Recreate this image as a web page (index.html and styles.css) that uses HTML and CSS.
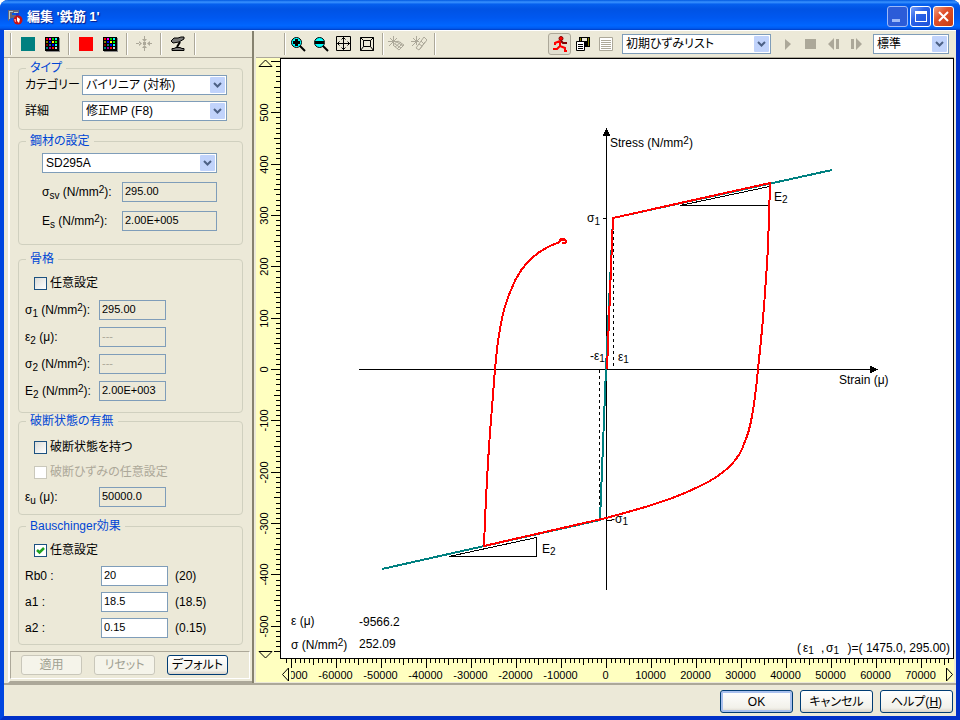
FILE: index.html
```html
<!DOCTYPE html>
<html lang="ja">
<head>
    <meta charset="UTF-8" />
    <meta name="viewport" content="width=device-width, initial-scale=1" />
    <title>編集 '鉄筋 1'</title>
    <link rel="stylesheet" href="styles.css">
</head>
<body>
    <svg class="defs" aria-hidden="true">
        <symbol id="palette" viewBox="0 0 16 16">
            <path fill="#888" d="M2 2h14v14H2z" />
            <path d="M1 1h14v14H1z" />
            <path fill="#f00" d="M2 2h2v2H2z" /><path fill="#f0f" d="M5 2h2v2H5z" />
            <path fill="#0c0" d="M8 2h2v2H8z" /><path fill="#0ff" d="M11 2h2v2h-2zM11 8h2v2h-2z" />
            <path fill="#808000" d="M2 5h2v2H2z" /><path fill="#00f" d="M5 5h2v2H5zM8 8h2v2H8z" />
            <path fill="#ff0" d="M8 5h2v2H8z" /><path fill="#0f0" d="M11 5h2v2h-2z" />
            <path fill="#800000" d="M2 8h2v2H2z" />
            <path fill="#008080" d="M5 8h2v2H5zM2 11h2v2H2z" /><path fill="#a000a0" d="M5 11h2v2H5z" />
            <path fill="#f00" d="M8 11h2v2H8z" /><path fill="#ccc" d="M11 11h2v2h-2z" />
        </symbol>
    </svg>

    <div class="window">
        <header class="titlebar">
            <svg class="app-icon" width="16" height="16" viewBox="0 0 16 16">
                <path fill="#667" d="M1 1h11v3H5v2h4v3H4l-3 3z" />
                <path fill="#b8cccc" d="M2 2h4v1H3v7H2zM7 3h4v1H7z" />
                <path fill="#2434c8" d="M9 4h3v4H9z" />
                <circle cx="11" cy="11" r="4.5" fill="#c71212" />
                <path fill="#fff" d="M10 8l3 2-1 4-2-2z" />
                <path fill="#f88" d="M7 10h2v3H8z" />
            </svg>
            <h1>編集 '鉄筋 1'</h1>
            <div class="window-buttons">
                <button class="win-btn minimize" aria-label="最小化">
                    <svg width="19" height="19" viewBox="0 0 19 19"><path fill="#9db9f8" d="M4 12h8v3H4z" /></svg>
                </button>
                <button class="win-btn" aria-label="最大化">
                    <svg width="19" height="19" viewBox="0 0 19 19"><path fill="#fff" d="M4 4h12v11H4zM5 7v7h10V7z" fill-rule="evenodd" /></svg>
                </button>
                <button class="win-btn close" aria-label="閉じる">
                    <svg width="19" height="19" viewBox="0 0 19 19"><path stroke="#fff" stroke-width="2" d="M5 5l9 9M14 5l-9 9" /></svg>
                </button>
            </div>
        </header>

        <main class="content">
            <section class="side">
                <div class="toolbar">
                    <span class="sep"></span>
                    <button class="tool" aria-label="骨格の色"><span class="swatch teal"></span></button>
                    <button class="tool" aria-label="骨格の色を選択"><svg width="16" height="16"><use href="#palette" /></svg></button>
                    <span class="sep"></span>
                    <button class="tool" aria-label="履歴の色"><span class="swatch red"></span></button>
                    <button class="tool" aria-label="履歴の色を選択"><svg width="16" height="16"><use href="#palette" /></svg></button>
                    <span class="sep"></span>
                    <button class="tool" aria-label="中央へ">
                        <svg width="16" height="16" viewBox="0 0 16 16" fill="#aca899">
                            <path d="M7 6h3v3H7zM6 3h5L8.500 6zM8 0h1v4H8zM6 12h5L8.500 9zM8 12h1v3H8zM3 5v5l3-2.500zM0 7h4v1H0zM14 5v5l-3-2.500zM13 7h3v1h-3z" />
                        </svg>
                    </button>
                    <span class="sep"></span>
                    <button class="tool" aria-label="顕微鏡">
                        <svg width="18" height="16" viewBox="0 0 18 16">
                            <path fill="#777" stroke="#000" d="M2 5l3-3h4l3-1h3v2l-5 3-6 1zM3 14.500v-2h2l2-1h4l2 1h2v2z" />
                            <path fill="none" stroke="#000" stroke-width="2" d="M8 11l3-5" />
                        </svg>
                    </button>
                    <span class="sep"></span>
                </div>

                <form class="panel">
                    <div class="groups">
                        <fieldset class="group type">
                            <legend>タイプ</legend>
                            <div class="row">
                                <label for="category">カテゴリー</label>
                                <select id="category" class="combo"><option>バイリニア (対称)</option></select>
                            </div>
                            <div class="row">
                                <label for="detail">詳細</label>
                                <select id="detail" class="combo"><option>修正MP (F8)</option></select>
                            </div>
                        </fieldset>

                        <fieldset class="group steel">
                            <legend>鋼材の設定</legend>
                            <select class="combo" aria-label="鋼材"><option>SD295A</option></select>
                            <div class="row">
                                <label for="sy">σ<sub>sv</sub> (N/mm<sup>2</sup>):</label>
                                <input id="sy" class="field" type="text" value="295.00" readonly />
                            </div>
                            <div class="row">
                                <label for="es">E<sub>s</sub> (N/mm<sup>2</sup>):</label>
                                <input id="es" class="field" type="text" value="2.00E+005" readonly />
                            </div>
                        </fieldset>

                        <fieldset class="group skeleton">
                            <legend>骨格</legend>
                            <label class="check"><input type="checkbox" />任意設定</label>
                            <div class="row">
                                <label for="s1">σ<sub>1</sub> (N/mm<sup>2</sup>):</label>
                                <input id="s1" class="field" type="text" value="295.00" readonly />
                            </div>
                            <div class="row">
                                <label for="e2">ε<sub>2</sub> (μ):</label>
                                <input id="e2" class="field" type="text" value="---" disabled />
                            </div>
                            <div class="row">
                                <label for="s2">σ<sub>2</sub> (N/mm<sup>2</sup>):</label>
                                <input id="s2" class="field" type="text" value="---" disabled />
                            </div>
                            <div class="row">
                                <label for="E2">E<sub>2</sub> (N/mm<sup>2</sup>):</label>
                                <input id="E2" class="field" type="text" value="2.00E+003" readonly />
                            </div>
                        </fieldset>

                        <fieldset class="group rupture">
                            <legend>破断状態の有無</legend>
                            <label class="check"><input type="checkbox" />破断状態を持つ</label>
                            <label class="check off"><input type="checkbox" disabled />破断ひずみの任意設定</label>
                            <div class="row">
                                <label for="eu">ε<sub>u</sub> (μ):</label>
                                <input id="eu" class="field" type="text" value="50000.0" readonly />
                            </div>
                        </fieldset>

                        <fieldset class="group bauschinger">
                            <legend>Bauschinger効果</legend>
                            <label class="check"><input type="checkbox" checked />任意設定</label>
                            <div class="row">
                                <label for="rb0">Rb0 :</label>
                                <input id="rb0" class="field" type="text" value="20" />
                                <span class="hint">(20)</span>
                            </div>
                            <div class="row">
                                <label for="a1">a1 :</label>
                                <input id="a1" class="field" type="text" value="18.5" />
                                <span class="hint">(18.5)</span>
                            </div>
                            <div class="row">
                                <label for="a2">a2 :</label>
                                <input id="a2" class="field" type="text" value="0.15" />
                                <span class="hint">(0.15)</span>
                            </div>
                        </fieldset>
                    </div>

                    <div class="panel-buttons">
                        <button type="button" class="btn" disabled>適用</button>
                        <button type="button" class="btn" disabled>リセット</button>
                        <button type="button" class="btn">デフォルト</button>
                    </div>
                </form>
            </section>

            <section class="view">
                <div class="toolbar view-tools">
                    <span class="sep"></span>
                    <button class="tool" aria-label="拡大">
                        <svg width="16" height="16" viewBox="0 0 16 16">
                            <circle cx="6.500" cy="6.500" r="5" fill="#0ff" stroke="#000" />
                            <path d="M5 3h3v2h2v3H8v2H5V8H3V5h2z" />
                            <path stroke="#000" stroke-width="2" d="M10 10l5 5" />
                        </svg>
                    </button>
                    <button class="tool" aria-label="縮小">
                        <svg width="16" height="16" viewBox="0 0 16 16">
                            <circle cx="6.500" cy="6.500" r="5" fill="#0ff" stroke="#000" />
                            <path d="M2 5h9v3H2z" />
                            <path stroke="#000" stroke-width="2" d="M10 10l5 5" />
                        </svg>
                    </button>
                    <button class="tool" aria-label="全体表示">
                        <svg width="16" height="16" viewBox="0 0 16 16" fill="none" stroke="#000">
                            <path d="M.5.5h14v14H.5zM7.500 1v13M1 7.500h13" />
                            <path d="M5.500 3.500l2-2 2 2M5.500 11.500l2 2 2-2M3.500 5.500l-2 2 2 2M11.500 5.500l2 2-2 2" />
                        </svg>
                    </button>
                    <button class="tool" aria-label="範囲表示">
                        <svg width="16" height="16" viewBox="0 0 16 16" fill="none" stroke="#000">
                            <path d="M1.500 1.500h13v13h-13zM4.500 4.500h7v6h-7zM1.500 1.500l3 3M14.500 1.500l-3 3M1.500 14.500l3-4M14.500 14.500l-3-4" />
                        </svg>
                    </button>
                    <span class="sep"></span>
                    <button class="tool" aria-label="ハッチ">
                        <svg width="16" height="16" viewBox="0 0 16 16" fill="none" stroke="#aca899">
                            <path d="M0 5.500h10M5.500 0v10M1 10l8-8M5 9l5-4 6 4-5 5zM7 8l6 4M9 6l6 4M7 11l6-5M9 13l5-5M2 2l3 3" />
                        </svg>
                    </button>
                    <button class="tool" aria-label="ハッチ解除">
                        <svg width="16" height="16" viewBox="0 0 16 16" fill="none" stroke="#aca899">
                            <path d="M0 5.500h8M5.500 0v9M1 10l8-8M5 12l8-11 3 3-8 10zM8 8l3 2M10 5l3 3M2 2l3 3M9 13l5-7" />
                        </svg>
                    </button>
                    <span class="sep"></span>

                    <div class="playback">
                        <div class="tool-set">
                            <button class="tool pressed" aria-label="実行">
                                <svg width="16" height="16" viewBox="0 0 16 16" fill="none">
                                    <path stroke="#800000" stroke-width="2" d="M9 5l2 2h4" />
                                    <circle cx="9" cy="2.500" r="2" fill="#f00" stroke="#800000" />
                                    <path stroke="#f00" stroke-width="2" d="M8 5L3 7v2M8 5v5l5 2v3h2M8 10l-3 3H1" />
                                </svg>
                            </button>
                            <button class="tool" aria-label="保存">
                                <svg width="16" height="16" viewBox="0 0 16 16">
                                    <path d="M4 1h11v10H4z" /><path fill="#808000" d="M5 2h1v6H5zM13 2h1v8h-1z" />
                                    <path fill="#ece9d8" d="M7 2h5v3H7z" />
                                    <path fill="#fff" stroke="#000" d="M1.500 5.500h8v9h-8z" />
                                    <path stroke="#000" d="M3 8.500h5M3 10.500h5M3 12.500h5" />
                                </svg>
                            </button>
                            <button class="tool" aria-label="一覧">
                                <svg width="16" height="16" viewBox="0 0 16 16">
                                    <path fill="#fff" stroke="#aca899" d="M1.500 1.500h13v13h-13z" />
                                    <path stroke="#aca899" d="M3 4.500h10M3 6.500h10M3 8.500h10M3 10.500h10M3 12.500h10" />
                                </svg>
                            </button>
                        </div>
                        <select class="combo list" aria-label="リスト"><option>初期ひずみリスト</option></select>
                        <div class="tool-set">
                            <button class="tool" aria-label="再生"><svg width="14" height="14" viewBox="0 0 14 14"><path fill="#aca899" d="M4 2l6 5-6 6z" /></svg></button>
                            <button class="tool" aria-label="停止"><svg width="14" height="14" viewBox="0 0 14 14"><path fill="#aca899" d="M1 2h11v10H1z" /></svg></button>
                            <button class="tool" aria-label="前へ"><svg width="14" height="14" viewBox="0 0 14 14"><path fill="#aca899" d="M7 1v12L1 7zM9 2h3v10H9z" /></svg></button>
                            <button class="tool" aria-label="次へ"><svg width="14" height="14" viewBox="0 0 14 14"><path fill="#aca899" d="M1 2h3v10H1zM6 1l6 6-6 6z" /></svg></button>
                        </div>
                        <select class="combo speed" aria-label="速度"><option>標準</option></select>
                    </div>
                </div>

                <svg class="chart" viewBox="0 0 698 624">
                    <rect class="ruler" width="698" height="624" />
                    <rect class="plot" x="24.500" y=".5" width="673" height="600" />
                    <g id="ticks"></g>
                    <g id="labels"></g>
                    <rect class="ruler" x="0" y="610" width="35" height="14" />
                    <path class="arrow" d="M3 8.500h13L9.500 2zM3 593.500h13L9.500 600zM32.500 610v13l-6-6.500zM690.500 610v13l6-6.500z" />

                    <!-- origin of the stress-strain axes -->
                    <g transform="translate(350 311)">
                        <path class="axis" d="M.5-236V221M-247 .5H267M-3-150.500H0M0 151.500h6" />
                        <path d="M.5-241l4 8h-8zM272 .5l-8 4v-8z" />
                        <path class="dash" d="M7.500-150V0M-6.500 1V151" />
                        <path class="skeleton-line" d="M226-199L7-151L0 0L-6 151L-224 200" />
                        <path class="axis" d="M74-163.500H163.500V-182.500zM-157 187.500H-69.500V168.500z" />
                        <path class="history-line" d="M1 0L7-151L164-186
                            C163-150 162-110 160-92C158-55 155-28 152 0C149 33 145 60 139 72
                            C134 90 120 105 94 117C70 129 45 137 0 149L-122 177
                            C-121 150-119 100-115 51C-113 25-112 12-111 0
                            C-108-35-103-62-95-79C-87-101-73-118-46-127" />
                        <path class="history-line" d="M-46-127c-1-4 5-4 6-1c0 2-2 3-4 2M-45-129h4" />

                        <text x="4" y="-222">Stress (N/mm<tspan class="small" dy="-3">2</tspan><tspan dy="3">)</tspan></text>
                        <text x="233" y="15">Strain (μ)</text>
                        <text x="-19" y="-147">σ<tspan class="small" dy="3">1</tspan></text>
                        <text x="168" y="-168">E<tspan class="small" dy="2">2</tspan></text>
                        <text x="-64" y="184">E<tspan class="small" dy="2">2</tspan></text>
                        <text x="-16" y="-9">-ε<tspan class="small" dy="2">1</tspan></text>
                        <text x="12" y="-8">ε<tspan class="small" dy="2">1</tspan></text>
                        <text x="5" y="154">-σ<tspan class="small" dy="2">1</tspan></text>
                    </g>

                    <text x="35" y="567">ε (μ)</text>
                    <text x="103" y="568">-9566.2</text>
                    <text x="35" y="591">σ (N/mm<tspan class="small" dy="-3">2</tspan><tspan dy="3">)</tspan></text>
                    <text x="103" y="590">252.09</text>
                    <text x="541" y="594">(</text>
                    <text x="547" y="594">ε<tspan class="small" dy="2">1</tspan></text>
                    <text x="565" y="594">,</text>
                    <text x="570" y="594">σ<tspan class="small" dy="2">1</tspan></text>
                    <text class="end" x="694" y="594">)=( 1475.0, 295.00)</text>
                </svg>
            </section>
        </main>

        <footer class="footer">
            <button class="btn large default">OK</button>
            <button class="btn large">キャンセル</button>
            <button class="btn large">ヘルプ(<u>H</u>)</button>
        </footer>
    </div>

    <script>
        const ticks = document.getElementById("ticks");
        const labels = document.getElementById("labels");
        const svgNs = "http://www.w3.org/2000/svg";

        function addTick(d) {
            const path = document.createElementNS(svgNs, "path");
            path.setAttribute("d", d);
            ticks.appendChild(path);
        }

        function addLabel(text, x, y, rotate) {
            const label = document.createElementNS(svgNs, "text");
            label.textContent = text;
            if (rotate) {
                label.setAttribute("transform", `translate(${x} ${y}) rotate(-90)`);
            } else {
                label.setAttribute("x", x);
                label.setAttribute("y", y);
            }
            labels.appendChild(label);
        }

        function tickLength(i) {
            if (i % 10 === 0) return 9;
            return i % 5 === 0 ? 6 : 4;
        }

        // strain: one tick every 1000
        for (let i = -71; i <= 76; i++) {
            const x = Math.round(350 + i * 4.505) + 0.5;
            addTick(`M${x} 601v${tickLength(i)}`);
            if (i % 10 === 0 && i <= 70) addLabel(i * 1000, x - 1, 621);
        }

        // stress: one tick every 10
        for (let i = -55; i <= 60; i++) {
            const y = Math.round(311 - i * 5.135) + 0.5;
            addTick(`M24 ${y}h${-tickLength(i)}`);
            if (i % 10 === 0 && Math.abs(i) <= 50) addLabel(i * 10, 12, y, true);
        }
    </script>
</body>
</html>
```

FILE: styles.css
```css
* {
    box-sizing: border-box;
}
body {
    margin: 0;
    background-color: #ffffff;
    color: #000000;
    font-family: "Liberation Sans", "Noto Sans CJK JP", sans-serif;
    font-size: 12px;
    line-height: 16px;
    font-feature-settings: "palt";
}
button, input, select {
    font: inherit;
    font-feature-settings: inherit;
    color: inherit;
    margin: 0;
    padding: 0;
}
.defs {
    display: none;
}
.window {
    display: flex;
    flex-direction: column;
    min-height: 100vh;
    background-color: #ece9d8;
    border: 4px solid #0046e0;
    border-top: 0;
    border-right-color: #0030c8;
    border-bottom-color: #0030c8;
    border-radius: 8px 8px 0 0;
}

/* title bar */
.titlebar {
    display: flex;
    align-items: center;
    gap: 4px;
    height: 30px;
    margin: 0 -4px;
    padding: 3px 6px 0 7px;
    border-radius: 8px 8px 0 0;
    background: linear-gradient(#0058e0 0, #3a93ff 7%, #0560ee 14%, #0053e4 30%, #0058f0 60%, #0066ff 85%, #005bf0 94%, #003dc4 100%);
}
h1 {
    flex: 1;
    margin: 0;
    color: #ffffff;
    font-size: 13px;
    line-height: 16px;
    text-shadow: 1px 1px 1px #0a1883;
}
.window-buttons {
    display: flex;
    gap: 2px;
}
.win-btn {
    width: 21px;
    height: 21px;
    border: 1px solid #ffffff;
    border-radius: 3px;
    background: linear-gradient(135deg, #7aa0f8, #2a62e8 40%, #1c50d8);
}
.win-btn svg {
    display: block;
}
.minimize {
    border-color: #9db9f8;
    background: #2c5cd8;
}
.close {
    background: linear-gradient(135deg, #f0a080, #e0502c 40%, #c83c10);
}

/* toolbars */
.content {
    flex: 1;
    display: flex;
    gap: 2px;
    padding-right: 2px;
    border-top: 1px solid #ffffff;
}
.toolbar {
    display: flex;
    align-items: center;
    height: 27px;
    border-bottom: 1px solid #aca899;
}
.side {
    display: flex;
    flex-direction: column;
    width: 250px;
    flex-shrink: 0;
    border-right: 2px solid #86826f;
}
.side .toolbar {
    padding-left: 6px;
}
.sep {
    width: 2px;
    height: 22px;
    margin: 0 4px;
    border-left: 1px solid #aca899;
    border-right: 1px solid #ffffff;
}
.side .sep:first-child {
    margin-left: 0;
}
.tool {
    display: flex;
    align-items: center;
    justify-content: center;
    width: 24px;
    height: 22px;
    border: 0;
    background: none;
}
.swatch {
    width: 14px;
    height: 14px;
}
.teal {
    background-color: #008080;
}
.red {
    background-color: #ff0000;
}
.view-tools {
    padding: 0 5px 0 24px;
}
.view-tools .sep {
    margin-right: 0;
}
.view-tools .tool {
    width: 23px;
}
.tool.pressed {
    border: 1px solid #aca899;
    border-radius: 3px;
    background-color: #e2dfd0;
}
.playback {
    display: flex;
    gap: 5px;
    align-items: center;
    margin-left: auto;
}
.tool-set {
    display: flex;
}
.list {
    width: 149px;
}
.speed {
    width: 76px;
}

/* settings panel */
.panel {
    flex: 1;
    display: flex;
    flex-direction: column;
    margin-left: 4px;
    padding: 3px 2px 2px 0;
    border-left: 2px solid #ffffff;
    border-bottom: 2px solid #aca899;
}
.groups {
    flex: 1;
    padding: 0 7px 0 8px;
}
.group {
    display: flex;
    flex-direction: column;
    min-width: 0;
    margin: 4px 0 0;
    padding: 0 6px;
    border: 1px solid #d0d0bf;
    border-radius: 4px;
}
.group legend {
    height: 14px;
    margin-left: 1px;
    padding: 0 4px;
    color: #0046d5;
    line-height: 14px;
}
.row {
    display: flex;
    align-items: center;
    height: 20px;
}
.row label {
    width: 74px;
    white-space: nowrap;
}
sub, sup {
    font-size: 10px;
    line-height: 0;
}
sub {
    vertical-align: -3px;
}
sup {
    vertical-align: 3px;
}
.type {
    gap: 6px;
    margin-top: 0;
    padding-bottom: 8px;
}
.type .row label {
    width: 57px;
}
.type .combo {
    width: 145px;
}
.steel {
    gap: 9px;
    padding: 5px 23px 13px;
}
.steel legend {
    margin-left: -16px;
}
.steel .combo {
    width: 175px;
}
.steel .row label {
    width: 80px;
}
.steel .field {
    width: 95px;
}
.skeleton {
    gap: 7px;
    margin-top: 7px;
    padding-top: 7px;
    padding-bottom: 11px;
}
.rupture {
    gap: 5px;
    margin-top: 1px;
    padding-top: 9px;
    padding-bottom: 7px;
}
.bauschinger {
    gap: 6px;
    padding-top: 7px;
    padding-bottom: 6px;
}
.bauschinger .row label {
    width: 76px;
}
.combo {
    appearance: none;
    height: 20px;
    padding: 0 18px 0 3px;
    border: 1px solid #7f9db9;
    border-radius: 0;
    background: #ffffff url("data:image/svg+xml,%3Csvg xmlns='http://www.w3.org/2000/svg' width='15' height='16'%3E%3Crect width='15' height='16' rx='1' fill='%23c1d3fb'/%3E%3Cpath d='M4 6l3.500 3.500L11 6' fill='none' stroke='%234d6185' stroke-width='2'/%3E%3C/svg%3E") no-repeat right 1px center;
}
.field {
    width: 67px;
    height: 20px;
    padding: 0 2px 2px;
    border: 1px solid #7f9db9;
    background-color: #ffffff;
    font-size: 11px;
}
.field:read-only {
    background-color: #ece9d8;
}
.field:disabled {
    color: #aca899;
}
.hint {
    margin-left: 7px;
}
.check {
    display: flex;
    align-items: center;
    gap: 3px;
    height: 20px;
    padding-left: 9px;
}
.check input {
    appearance: none;
    width: 13px;
    height: 13px;
    border: 1px solid #1c5180;
    background: linear-gradient(135deg, #dcdcd7, #ffffff);
}
.check input:checked {
    background: #ffffff url("data:image/svg+xml,%3Csvg xmlns='http://www.w3.org/2000/svg' width='11' height='11'%3E%3Cpath d='M2 5l2.500 2.500L9 3' fill='none' stroke='%2321a121' stroke-width='2.500'/%3E%3C/svg%3E");
}
.check input:disabled {
    border-color: #cac8bb;
    background: #ffffff;
}
.off {
    color: #aca899;
}
.panel-buttons {
    display: flex;
    gap: 12px;
    padding: 3px 10px 3px;
    border: 1px solid #aca899;
    border-right-color: #ffffff;
    border-bottom-color: #ffffff;
}
.btn {
    width: 61px;
    height: 20px;
    border: 1px solid #003c74;
    border-radius: 3px;
    background: linear-gradient(#ffffff, #f2f1ea 80%, #d8d2c8);
    line-height: 16px;
    white-space: nowrap;
}
.btn:disabled {
    border-color: #c9c7ba;
    background: #f5f4ea;
    color: #a1a192;
}

/* chart */
.view {
    flex: 1;
    display: flex;
    flex-direction: column;
    min-width: 0;
}
.chart {
    display: block;
    width: 100%;
    background-color: #ffffc0;
}
.chart path {
    shape-rendering: crispEdges;
}
.chart .arrow {
    shape-rendering: auto;
}
.chart text {
    font-size: 12px;
}
.chart .small {
    font-size: 10px;
}
.chart .end {
    text-anchor: end;
}
.ruler {
    fill: #ffffc0;
}
.plot {
    fill: #ffffff;
    stroke: #000000;
}
#ticks path, .axis, .dash, .arrow {
    fill: none;
    stroke: #000000;
}
.dash {
    stroke-dasharray: 3 3;
}
#labels text {
    font-size: 11px;
    text-anchor: middle;
}
.skeleton-line, .history-line {
    fill: none;
    stroke: #008080;
    stroke-width: 2;
}
.history-line {
    stroke: #ff0000;
}

/* dialog buttons */
.footer {
    display: flex;
    justify-content: flex-end;
    gap: 7px;
    padding: 5px 3px 3px;
    border-top: 2px solid #aca899;
}
.large {
    width: 73px;
    height: 23px;
}
.default {
    box-shadow: inset 0 0 0 2px #a9c0ee;
}
```
